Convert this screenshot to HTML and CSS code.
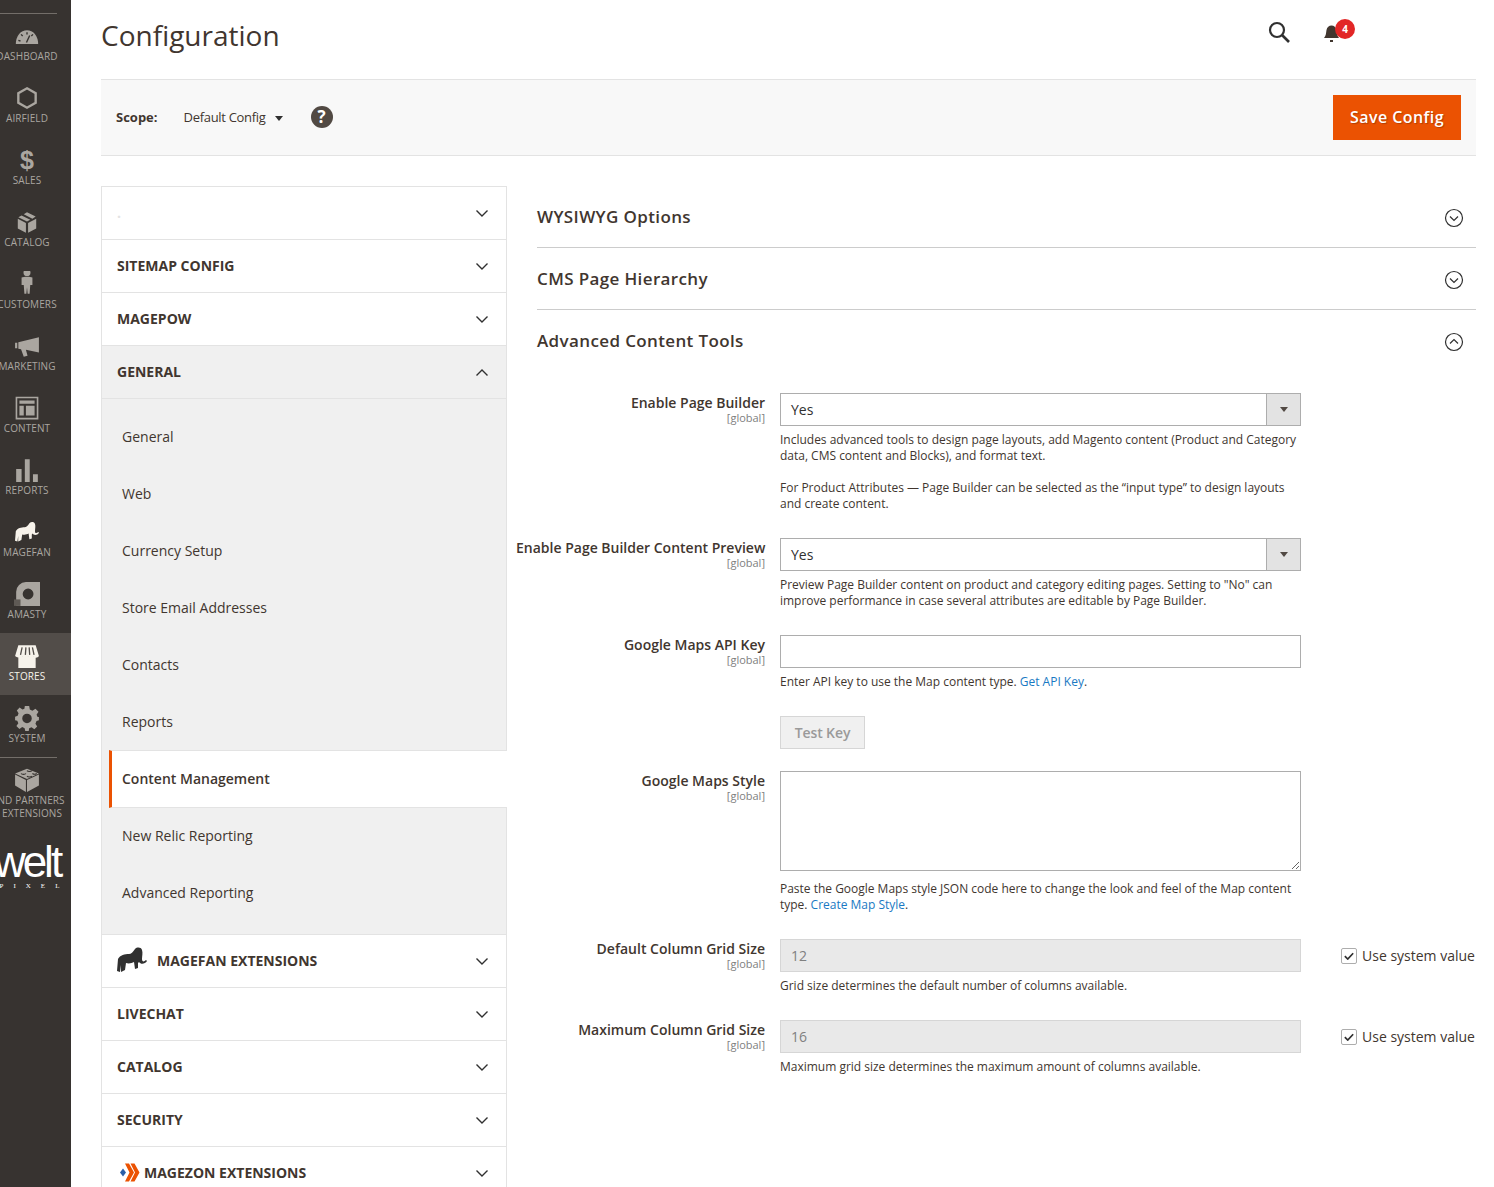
FILE: index.html
```html
<!DOCTYPE html>
<html lang="en">
<head>
    <meta charset="UTF-8">
    <title>Configuration</title>
    <link rel="stylesheet" href="styles.css">
</head>
<body>
    <svg class="defs" width="0" height="0">
        <symbol id="elephant" viewBox="0 0 30 26">
            <path d="M0 24 L1 12 C3 8 8 7 12 7 C14 7 16 5 18 2 C20 0 24 0 25 3 C26 6 25 9 25 12 C25 15 27 15 29 13 L30 14 C28 17 24 18 22 15 L21 16 L21 21 L18 22 L17 15 C15 16 12 17 9 16 L8 23 L4 25 L4 18 L3 25 Z"/>
        </symbol>
        <symbol id="chev-down" viewBox="0 0 12 7">
            <path d="M0.5 0.5 L6 6 L11.5 0.5" fill="none" stroke="#303030" stroke-width="1.4"/>
        </symbol>
    </svg>

    <nav class="sidebar">
        <div class="sidebar-inner">
            <ul class="menu">
                <li class="menu-item">
                    <svg class="menu-icon" viewBox="0 0 24 24"><path d="M1 20 C1 11 6 6 12 6 C18 6 23 11 23 20 Z M4 16 L6 16.6 M6.5 10.5 L8 12 M12 8.5 L12 10.5 M17.5 10.5 L16 12 M14.5 11.5 L11.5 18" stroke="#373330" stroke-width="1.3"/></svg>
                    <span>Dashboard</span>
                </li>
                <li class="menu-item">
                    <svg class="menu-icon" viewBox="0 0 24 24"><path d="M12 3 L20 7.5 L20 16.5 L12 21 L4 16.5 L4 7.5 Z" fill="none" stroke="#aaa6a0" stroke-width="2.2"/></svg>
                    <span>Airfield</span>
                </li>
                <li class="menu-item">
                    <span class="menu-glyph">$</span>
                    <span>Sales</span>
                </li>
                <li class="menu-item">
                    <svg class="menu-icon" viewBox="0 0 24 24"><path d="M12 3 L20 7 L17 9 L9 4.8 Z M7 6 L15 10 L12 11.5 L4 7.5 Z M3.5 9 L11 13 L11 22 L3.5 18 Z M20.5 9 L20.5 18 L13 22 L13 13 Z"/></svg>
                    <span>Catalog</span>
                </li>
                <li class="menu-item">
                    <svg class="menu-icon" viewBox="0 2 24 24"><circle cx="12" cy="3.5" r="3.2"/><path d="M7 8 C9 7 15 7 17 8 L17 15 L15 15 L14.4 23 L12.6 23 L12 17 L11.4 23 L9.6 23 L9 15 L7 15 Z"/></svg>
                    <span>Customers</span>
                </li>
                <li class="menu-item">
                    <svg class="menu-icon" viewBox="0 0 24 24"><path d="M1 9 L3 9 L3 14 L1 14 Z M4 8.5 L23 4 L23 18 L11 15.5 L12.5 21 L9 22 L6.5 15 L4 14.5 Z"/></svg>
                    <span>Marketing</span>
                </li>
                <li class="menu-item">
                    <svg class="menu-icon" viewBox="0 0 24 24"><path fill-rule="evenodd" d="M1.5 1.5 H22.5 V22.5 H1.5 Z M3 3 V21 H21 V3 Z M5 5 H19 V8 H5 Z M5 10 H9 V19 H5 Z M11 10 H19 V19 H11 Z"/></svg>
                    <span>Content</span>
                </li>
                <li class="menu-item">
                    <svg class="menu-icon" viewBox="0 0 24 24"><path d="M2 11 H7 V23 H2 Z M10 2 H14.5 V23 H10 Z M17.5 16 H22 V23 H17.5 Z"/></svg>
                    <span>Reports</span>
                </li>
                <li class="menu-item">
                    <svg class="menu-icon menu-elephant"><use href="#elephant"/></svg>
                    <span>MageFan</span>
                </li>
                <li class="menu-item">
                    <svg class="menu-icon" viewBox="0 0 24 24"><path fill-rule="evenodd" d="M11 1 H24 V23 H2 V10 A9 9 0 0 1 11 1 Z M13 7 A5 5 0 1 0 13 17 A5 5 0 1 0 13 7 Z"/><path d="M0 17 H6 V23 H0 Z" fill="#5f5a55"/></svg>
                    <span>Amasty</span>
                </li>
                <li class="menu-item is-active">
                    <svg class="menu-icon" viewBox="0 0 24 24"><path d="M4 13 H20 V23 H4 Z M1 12 L4 2 H20 L23 12 C22 14 19 14 18 12.6 C17 14 14 14 13 12.6 C12 14 9 14 8 12.6 C7 14 3 14 1 12 Z"/><path d="M7.5 4 L6 11 M11 4 L10.5 11 M14 4 L14.5 11 M17 4 L18.5 11" stroke="#524d49" stroke-width="1.2"/></svg>
                    <span>Stores</span>
                </li>
                <li class="menu-item">
                    <svg class="menu-icon" viewBox="0 0 24 24"><path fill-rule="evenodd" d="M10 1 H14 L14.6 4.2 L17 5.2 L19.8 3.4 L22.6 6.2 L20.8 9 L21.8 11 L23 11 V14 L20.8 14.8 L19.8 17.2 L21.4 19.8 L18.8 22.4 L16.2 20.6 L14 21.4 L13.6 24 H10.4 L9.8 21.4 L7.6 20.4 L5 22.2 L2.2 19.4 L4 16.8 L3 14.6 L1 14 V10.8 L3.4 10 L4.2 7.6 L2.6 5 L5.2 2.4 L7.8 4.2 L9.6 3.4 Z M12 8 A4.4 4.4 0 1 0 12 16.8 A4.4 4.4 0 1 0 12 8 Z"/></svg>
                    <span>System</span>
                </li>
                <li class="menu-item menu-partners">
                    <svg class="menu-icon" viewBox="0 0 24 24"><path d="M12 12 L23 7 L23 17 L12 23 Z M11 12 L1 7 L1 17 L11 23 Z M12 1.5 L23 6 L12 11 L1 6 Z"/><path d="M6.5 6 A2.4 1.2 0 0 0 11 6 M12 3.4 A2.4 1.2 0 0 0 16.5 3.4 M12 8.4 A2.4 1.2 0 0 0 16.5 8.4 M17 6 A2.4 1.2 0 0 0 21 6" fill="none" stroke="#373330"/></svg>
                    <span>Find Partners<br>&amp; Extensions</span>
                </li>
            </ul>
            <div class="logo">
                <div class="logo-word">welt</div>
                <div class="logo-sub">PIXEL</div>
            </div>
        </div>
    </nav>

    <main class="page">
        <header class="page-header">
            <h1>Configuration</h1>
            <div class="header-actions">
                <svg class="search-icon" viewBox="0 0 22 22"><circle cx="9" cy="9" r="7" fill="none" stroke="#303030" stroke-width="2.2"/><path d="M14 14 L21 21" stroke="#303030" stroke-width="2.6"/></svg>
                <div class="bell">
                    <svg class="bell-icon" viewBox="0 0 18 20"><path d="M1 15 C3 13 3 10 3.5 7 C4 4 6 2.5 8.5 2.5 C11 2.5 13 4 13.5 7 C14 10 14 13 16 15 Z M7 17 H10 V19 H7 Z" fill="#41362f"/></svg>
                    <span class="bell-badge">4</span>
                </div>
            </div>
        </header>

        <div class="toolbar">
            <div class="scope">
                <strong>Scope:</strong>
                <span class="scope-value">Default Config</span>
                <span class="scope-arrow"></span>
                <span class="help">?</span>
            </div>
            <button class="save-button">Save Config</button>
        </div>

        <div class="columns">
            <aside class="tabs">
                <div class="tab"><span class="tab-title tab-blank">.</span><svg class="chev"><use href="#chev-down"/></svg></div>
                <div class="tab"><span class="tab-title">Sitemap Config</span><svg class="chev"><use href="#chev-down"/></svg></div>
                <div class="tab"><span class="tab-title">Magepow</span><svg class="chev"><use href="#chev-down"/></svg></div>
                <div class="tab tab-open"><span class="tab-title">General</span><svg class="chev chev-up"><use href="#chev-down"/></svg></div>
                <ul class="subtabs">
                    <li>General</li>
                    <li>Web</li>
                    <li>Currency Setup</li>
                    <li>Store Email Addresses</li>
                    <li>Contacts</li>
                    <li>Reports</li>
                    <li class="is-current">Content Management</li>
                    <li>New Relic Reporting</li>
                    <li>Advanced Reporting</li>
                </ul>
                <div class="tab"><span class="tab-title tab-with-icon"><svg class="tab-elephant"><use href="#elephant"/></svg>MageFan Extensions</span><svg class="chev"><use href="#chev-down"/></svg></div>
                <div class="tab"><span class="tab-title">LiveChat</span><svg class="chev"><use href="#chev-down"/></svg></div>
                <div class="tab"><span class="tab-title">Catalog</span><svg class="chev"><use href="#chev-down"/></svg></div>
                <div class="tab"><span class="tab-title">Security</span><svg class="chev"><use href="#chev-down"/></svg></div>
                <div class="tab"><span class="tab-title tab-with-icon"><svg class="tab-magezon" viewBox="0 0 21 19"><path d="M1 9.5 L4 5.5 L7 9.5 L4 13.5 Z" fill="#2a5fa8"/><path d="M6 0.5 H10 L15 9.5 L10 18.5 H6 L10.5 9.5 Z M11.5 0.5 H15.5 L20.5 9.5 L15.5 18.5 H11.5 L16 9.5 Z" fill="#eb5202"/></svg>Magezon Extensions</span><svg class="chev"><use href="#chev-down"/></svg></div>
            </aside>

            <section class="settings">
                <div class="section-head">
                    <h2>WYSIWYG Options</h2>
                    <svg class="circle-icon" viewBox="0 0 20 20"><circle cx="10" cy="10" r="8.5" fill="none" stroke="#303030" stroke-width="1.2"/><path d="M6 8.5 L10 12.5 L14 8.5" fill="none" stroke="#303030" stroke-width="1.2"/></svg>
                </div>
                <div class="section-head">
                    <h2>CMS Page Hierarchy</h2>
                    <svg class="circle-icon" viewBox="0 0 20 20"><circle cx="10" cy="10" r="8.5" fill="none" stroke="#303030" stroke-width="1.2"/><path d="M6 8.5 L10 12.5 L14 8.5" fill="none" stroke="#303030" stroke-width="1.2"/></svg>
                </div>
                <div class="section-head section-open">
                    <h2>Advanced Content Tools</h2>
                    <svg class="circle-icon" viewBox="0 0 20 20"><circle cx="10" cy="10" r="8.5" fill="none" stroke="#303030" stroke-width="1.2"/><path d="M6 11.5 L10 7.5 L14 11.5" fill="none" stroke="#303030" stroke-width="1.2"/></svg>
                </div>

                <div class="form">
                    <div class="row">
                        <div class="row-label">Enable Page Builder<small>[global]</small></div>
                        <div class="row-control">
                            <div class="select"><span>Yes</span><i class="select-btn"></i></div>
                            <p class="note">Includes advanced tools to design page layouts, add Magento content (Product and Category data, CMS content and Blocks), and format text.<br><br>For Product Attributes — Page Builder can be selected as the “input type” to design layouts and create content.</p>
                        </div>
                    </div>
                    <div class="row">
                        <div class="row-label">Enable Page Builder Content Preview<small>[global]</small></div>
                        <div class="row-control">
                            <div class="select"><span>Yes</span><i class="select-btn"></i></div>
                            <p class="note">Preview Page Builder content on product and category editing pages. Setting to "No" can improve performance in case several attributes are editable by Page Builder.</p>
                        </div>
                    </div>
                    <div class="row">
                        <div class="row-label">Google Maps API Key<small>[global]</small></div>
                        <div class="row-control">
                            <input class="field" type="text">
                            <p class="note">Enter API key to use the Map content type. <a href="#">Get API Key</a>.</p>
                        </div>
                    </div>
                    <div class="row row-button">
                        <div></div>
                        <div class="row-control"><button class="test-button">Test Key</button></div>
                    </div>
                    <div class="row">
                        <div class="row-label">Google Maps Style<small>[global]</small></div>
                        <div class="row-control">
                            <textarea class="field field-area"></textarea>
                            <p class="note note-area">Paste the Google Maps style JSON code here to change the look and feel of the Map content type. <a href="#">Create Map Style</a>.</p>
                        </div>
                    </div>
                    <div class="row">
                        <div class="row-label">Default Column Grid Size<small>[global]</small></div>
                        <div class="row-control">
                            <input class="field" type="text" value="12" disabled>
                            <p class="note">Grid size determines the default number of columns available.</p>
                        </div>
                        <label class="use-default"><span class="check"><svg viewBox="0 0 12 10"><path d="M1 5 L4.5 8.5 L11 1.5" fill="none" stroke="#303030" stroke-width="2"/></svg></span>Use system value</label>
                    </div>
                    <div class="row">
                        <div class="row-label">Maximum Column Grid Size<small>[global]</small></div>
                        <div class="row-control">
                            <input class="field" type="text" value="16" disabled>
                            <p class="note">Maximum grid size determines the maximum amount of columns available.</p>
                        </div>
                        <label class="use-default"><span class="check"><svg viewBox="0 0 12 10"><path d="M1 5 L4.5 8.5 L11 1.5" fill="none" stroke="#303030" stroke-width="2"/></svg></span>Use system value</label>
                    </div>
                </div>
            </section>
        </div>
    </main>
</body>
</html>
```

FILE: styles.css
```css
* {
    box-sizing: border-box;
}

html, body {
    height: 100vh;
    margin: 0;
    overflow: hidden;
}

body {
    display: flex;
    font-family: "Open Sans", sans-serif;
    font-size: 14px;
    color: #303030;
    background-color: white;
}

.defs {
    position: absolute;
}

ul {
    list-style: none;
    margin: 0;
    padding: 0;
}

/* sidebar */
.sidebar {
    flex: 0 0 71px;
    background-color: #373330;
    overflow: hidden;
}

.sidebar-inner {
    width: 88px;
    margin-left: -17px;
    padding-top: 13px;
}

.menu {
    position: relative;
}

.menu::before {
    content: "";
    display: block;
    height: 1px;
    margin: 0 14px -1px;
    background-color: #736e69;
}

.menu-item {
    height: 62px;
    padding-top: 10px;
    display: flex;
    flex-direction: column;
    align-items: center;
    font-size: 10px;
    line-height: 14px;
    letter-spacing: 0.1px;
    text-transform: uppercase;
    color: #aaa6a0;
    white-space: nowrap;
    text-align: center;
}

.menu-icon {
    width: 26px;
    height: 26px;
    fill: #aaa6a0;
    flex: none;
}

.menu-elephant {
    width: 24px;
    fill: #f7f3eb;
}

.menu-glyph {
    height: 26px;
    font-family: "Liberation Sans", sans-serif;
    font-size: 25px;
    font-weight: bold;
    line-height: 26px;
}

.menu-item.is-active {
    background-color: #524d49;
    color: #f7f3eb;
}

.is-active .menu-icon {
    fill: #f7f3eb;
}

.menu-partners {
    position: relative;
    height: 86px;
    line-height: 13px;
}

.menu-partners span {
    margin-top: 1px;
}

.menu-partners::before {
    content: "";
    position: absolute;
    top: 0;
    left: 14px;
    right: 14px;
    height: 1px;
    background-color: #736e69;
}

.logo {
    margin-top: 1px;
    text-align: center;
    color: white;
}

.logo-word {
    font-family: "Liberation Sans", sans-serif;
    font-size: 44px;
    line-height: 36px;
    letter-spacing: -3px;
}

.logo-sub {
    font-family: "Liberation Serif", serif;
    font-size: 7px;
    line-height: 10px;
    letter-spacing: 10px;
    margin-right: -10px;
    margin-top: 1px;
    padding-left: 5px;
}

/* main */
.page {
    flex: 1;
    min-width: 0;
    padding: 0 18px 0 30px;
}

.page-header {
    height: 80px;
    display: flex;
    justify-content: space-between;
    border-bottom: 1px solid #e3e3e3;
}

h1 {
    margin: 14px 0 0;
    font-size: 28px;
    font-weight: 400;
    line-height: 42px;
    color: #41362f;
}

.header-actions {
    position: relative;
    width: 208px;
}

.search-icon {
    position: absolute;
    left: 0;
    top: 21px;
    width: 22px;
    height: 22px;
}

.bell {
    position: absolute;
    left: 55px;
    top: 19px;
    width: 34px;
    height: 24px;
}

.bell-icon {
    position: absolute;
    left: 0;
    top: 4px;
    width: 18px;
    height: 20px;
}

.bell-badge {
    position: absolute;
    left: 12px;
    top: 0;
    width: 20px;
    height: 20px;
    border-radius: 50%;
    background-color: #e22626;
    color: white;
    font-size: 10px;
    font-weight: 700;
    line-height: 20px;
    text-align: center;
}

.toolbar {
    height: 76px;
    padding: 0 15px;
    display: flex;
    align-items: center;
    justify-content: space-between;
    background-color: #f8f8f8;
    border-bottom: 1px solid #e3e3e3;
}

.scope {
    display: flex;
    align-items: center;
    padding-bottom: 1px;
    font-size: 13px;
    color: #41362f;
}

.scope strong {
    margin-right: 26px;
}

.scope-value {
    letter-spacing: -0.3px;
}

.scope-arrow {
    margin: 2px 0 0 9px;
    border-left: 4px solid transparent;
    border-right: 4px solid transparent;
    border-top: 5px solid #303030;
}

.help {
    width: 22px;
    height: 22px;
    margin-left: 28px;
    border-radius: 50%;
    background-color: #514943;
    color: white;
    font-size: 17px;
    font-weight: 700;
    line-height: 22px;
    text-align: center;
}

.save-button {
    width: 128px;
    height: 45px;
    padding: 0 0 2px;
    border: none;
    background-color: #eb5202;
    color: white;
    font-family: inherit;
    font-size: 16px;
    font-weight: 600;
    letter-spacing: 0.45px;
    text-shadow: 1px 1px 1px rgba(0, 0, 0, 0.25);
}

.columns {
    display: flex;
    align-items: flex-start;
    gap: 30px;
    margin-top: 30px;
}

/* left tabs */
.tabs {
    flex: 0 0 406px;
    border-left: 1px solid #e3e3e3;
    border-right: 1px solid #e3e3e3;
    border-top: 1px solid #e3e3e3;
}

.tab {
    height: 53px;
    padding: 0 18px 0 15px;
    display: flex;
    align-items: center;
    justify-content: space-between;
    border-bottom: 1px solid #e3e3e3;
}

.tab-open {
    background-color: #f0f0f0;
}

.tab-title {
    padding-bottom: 2px;
    font-weight: 700;
    text-transform: uppercase;
    color: #41362f;
    display: flex;
    align-items: center;
}

.tab-blank {
    color: #e3e3e3;
}

.chev {
    width: 12px;
    height: 7px;
    margin-top: 1px;
}

.chev-up {
    transform: rotate(180deg);
}

.tab-elephant {
    width: 30px;
    height: 26px;
    margin-right: 10px;
    fill: #303030;
}

.tab-magezon {
    width: 21px;
    height: 19px;
    margin: 0 4px 0 2px;
}

.subtabs {
    padding: 9px 0 13px;
    background-color: #f0f0f0;
    border-bottom: 1px solid #e3e3e3;
}

.subtabs li {
    height: 57px;
    padding-left: 20px;
    display: flex;
    align-items: center;
    color: #41362f;
}

.subtabs .is-current {
    height: 58px;
    margin: 0 -1px -1px 7px;
    padding: 0 0 2px 10px;
    background-color: white;
    border-top: 1px solid #e3e3e3;
    border-bottom: 1px solid #e3e3e3;
    border-left: 3px solid #eb5202;
    font-weight: 600;
}

/* right side */
.settings {
    flex: 1;
    min-width: 0;
}

.section-head {
    height: 62px;
    display: flex;
    align-items: center;
    justify-content: space-between;
    padding-right: 12px;
    border-bottom: 1px solid #cccccc;
}

h2 {
    margin: 0;
    font-size: 17px;
    font-weight: 600;
    letter-spacing: 0.37px;
    color: #41362f;
}

.circle-icon {
    width: 20px;
    height: 20px;
    margin-top: 2px;
}

.section-open {
    height: 61px;
    border-bottom: none;
}

.section-open .circle-icon {
    margin-top: 3px;
}

.form {
    margin: 22px 0 0 -21px;
}

.row {
    display: grid;
    grid-template-columns: 249px 521px auto;
    column-gap: 15px;
    margin-bottom: 26px;
    align-items: start;
}

.row-button {
    margin-bottom: 22px;
}

.row-label {
    text-align: right;
    font-weight: 600;
    line-height: 19px;
    white-space: nowrap;
    color: #41362f;
}

.row-label small {
    display: block;
    font-size: 11px;
    font-weight: 400;
    line-height: 11px;
    color: #808080;
}

.select {
    height: 33px;
    display: flex;
    align-items: center;
    justify-content: space-between;
    padding-left: 10px;
    border: 1px solid #adadad;
}

.select-btn {
    position: relative;
    width: 34px;
    height: 31px;
    background-color: #e3e3e3;
    border-left: 1px solid #adadad;
}

.select-btn::after {
    content: "";
    position: absolute;
    left: 13px;
    top: 13px;
    border-left: 4px solid transparent;
    border-right: 4px solid transparent;
    border-top: 5px solid #514943;
}

.field {
    display: block;
    width: 100%;
    height: 33px;
    padding: 0 10px;
    border: 1px solid #adadad;
    border-radius: 0;
    background-color: white;
    font-family: inherit;
    font-size: 14px;
    color: #303030;
}

.field:disabled {
    background-color: #e9e9e9;
    border-color: #d6d6d6;
    color: #808080;
}

.field-area {
    height: 100px;
}

.note {
    margin: 6px 0 0;
    font-size: 12px;
    line-height: 16px;
    letter-spacing: -0.01px;
    color: #41362f;
}

.note-area {
    margin-top: 10px;
}

.note a {
    color: #1979c3;
    text-decoration: none;
}

.test-button {
    width: 85px;
    height: 33px;
    padding: 0;
    border: 1px solid #d6d6d6;
    background-color: #f0f0f0;
    color: #9a9a9a;
    font-family: inherit;
    font-size: 14px;
    font-weight: 600;
    letter-spacing: -0.1px;
}

.use-default {
    display: flex;
    align-items: center;
    height: 33px;
    margin-left: 25px;
    white-space: nowrap;
    color: #41362f;
}

.check {
    width: 16px;
    height: 16px;
    margin: 1px 5px 0 0;
    padding: 2px;
    display: flex;
    align-items: center;
    border: 1px solid #adadad;
    border-radius: 2px;
}

.check svg {
    width: 100%;
}
```
